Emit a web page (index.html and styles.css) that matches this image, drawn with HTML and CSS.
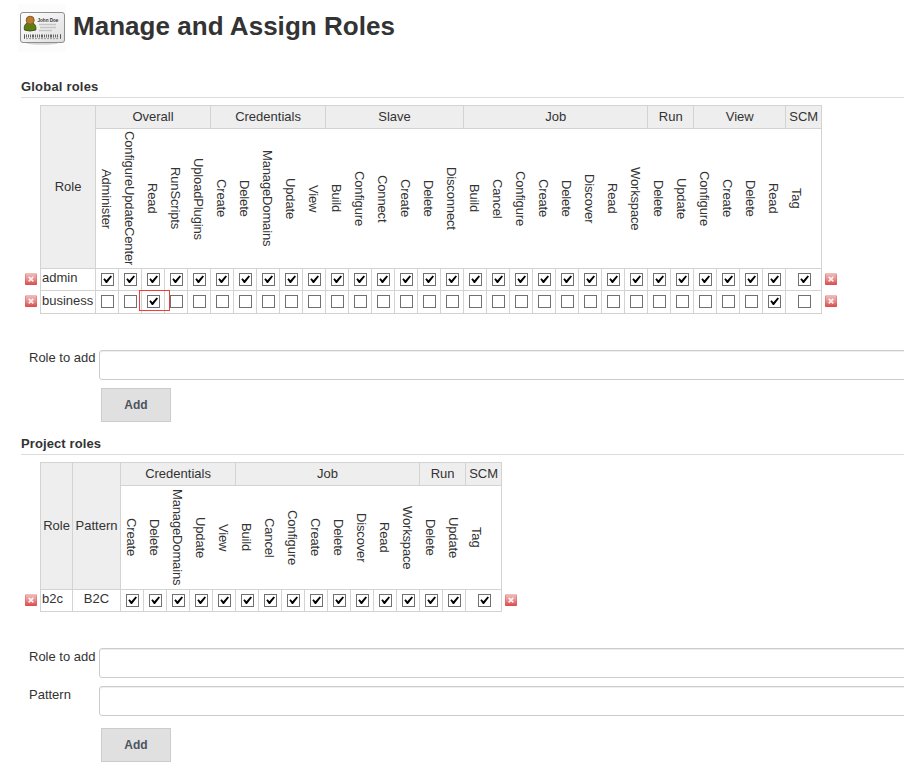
FILE: index.html
```
<!DOCTYPE html>
<html lang="en">
<head>
    <meta charset="UTF-8">
    <title>Manage and Assign Roles</title>
    <link rel="stylesheet" href="styles.css">
</head>
<body>

    <!-- Shared icons -->
    <svg class="defs">
        <defs>
            <linearGradient id="red" x1="0" y1="0" x2="0" y2="1">
                <stop offset="0" stop-color="#f2c0c0"/>
                <stop offset="0.5" stop-color="#e69090"/>
                <stop offset="1" stop-color="#dc4646"/>
            </linearGradient>
            <linearGradient id="card" x1="0" y1="0" x2="1" y2="1">
                <stop offset="0" stop-color="#ffffff"/>
                <stop offset="1" stop-color="#dedede"/>
            </linearGradient>
        </defs>
        <symbol id="delete" viewBox="0 0 12 12">
            <rect width="12" height="12" rx="1" fill="url(#red)"/>
            <path d="M0.5 1V11.5H11.5V1" fill="none" stroke="#d65a5a" stroke-opacity="0.4"/>
            <path d="M3.7 3.9L8.3 8.3M8.3 3.9L3.7 8.3" stroke="#fff" stroke-opacity="0.85" stroke-width="1.8"/>
        </symbol>
        <symbol id="box" viewBox="0 0 13 13">
            <rect x="0.5" y="0.5" width="12" height="12" fill="#fff" stroke="#707070"/>
        </symbol>
        <symbol id="checked" viewBox="0 0 13 13">
            <rect x="0.5" y="0.5" width="12" height="12" fill="#fff" stroke="#707070"/>
            <path d="M2.3 6.2L3.7 5.2L5.4 7.2L9.6 2.5L11 3.4L6 9.9H4.9Z" fill="#000"/>
        </symbol>
    </svg>

    <h1>
        <svg class="logo" viewBox="0 0 48 48">
            <rect width="48" height="48" fill="#fcfcfc"/>
            <ellipse cx="24" cy="39" rx="16" ry="1.8" fill="#d5d5d5"/>
            <rect x="2.5" y="8.5" width="44" height="30" rx="2.5" fill="url(#card)" stroke="#8d8f8e"/>
            <path d="M6.5 26C5.5 21 8 18.5 12 18.5S18.5 21 17.8 26Q12 28 6.5 26Z" fill="#5d7c16" stroke="#3d560c"/>
            <circle cx="12.2" cy="16.2" r="4" fill="#b97b32" stroke="#8a5a20"/>
            <text class="logo-name" x="19.5" y="17.6">John Doe</text>
            <path d="M21 20.5H38M22 23.5H38M21 26.5H34" stroke="#c4c4c4" stroke-width="1.4"/>
            <path d="M7 30.5H6.5V34.5H7M42 30.5H42.5V34.5H42" fill="none" stroke="#555"/>
            <path d="M8 32H41" stroke="#666" stroke-width="3" stroke-dasharray="1 1 1 1 1 1 2 1"/>
            <path d="M8 34.6H41" stroke="#888" stroke-width="0.8" stroke-dasharray="2 1"/>
        </svg>
        <span>Manage and Assign Roles</span>
    </h1>

    <h3>Global roles</h3>
    <table class="roles global" id="globalRoles"></table>

    <div class="form-row">
        <label for="role">Role to add</label>
        <input type="text" id="role">
    </div>
    <button class="add">Add</button>

    <h3 class="project-title">Project roles</h3>
    <table class="roles project" id="projectRoles"></table>

    <div class="form-row low">
        <label for="projectRole">Role to add</label>
        <input type="text" id="projectRole">
    </div>
    <div class="form-row low">
        <label for="pattern">Pattern</label>
        <input type="text" id="pattern">
    </div>
    <button class="add last">Add</button>

    <script src="script.js"></script>
</body>
</html>
```
FILE: styles.css
```
body {
    margin: 0;
    width: 904px;
    height: 769px;
    overflow: hidden;
    background: #fff;
    color: #333;
    font-family: "Liberation Sans", Arial, sans-serif;
    font-size: 13px;
    line-height: 15px;
}
.defs {
    position: absolute;
    width: 0;
    height: 0;
}
h1 {
    display: flex;
    margin: 0;
    padding: 4px 0 0 18px;
    height: 75px;
    box-sizing: border-box;
    font-size: 26px;
    line-height: 44px;
    white-space: nowrap;
}
h1 span {
    margin-left: 7px;
    letter-spacing: 0.03px;
}
.logo {
    width: 48px;
    height: 48px;
}
.logo-name {
    font-size: 4.6px;
    font-weight: bold;
    fill: #333;
}
h3 {
    margin: 0 0 7px 21px;
    padding: 4px 0 3px;
    height: 23px;
    box-sizing: border-box;
    border-bottom: 1px solid #ddd;
    font-size: 13px;
    line-height: 15px;
    letter-spacing: 0.2px;
}
.project-title {
    margin-top: 10px;
    letter-spacing: 0.1px;
}

/* Permission tables */
.roles {
    margin-left: 24px;
    table-layout: fixed;
    border-collapse: separate;
    border-spacing: 0;
}
.global {
    width: 814px;
    margin-bottom: 36px;
}
.project {
    width: 494px;
    margin-bottom: 36px;
}
.icon-col { width: 16px; }
.perm-col { width: 23px; }
.last-col { width: 36px; }
.global .role-col { width: 55px; }
.project .role-col { width: 32px; }
.pattern-col { width: 48px; }
.end-col { width: 17px; }

.roles td {
    box-sizing: border-box;
    padding: 0;
    border-left: 1px solid #d3d3cf;
    border-top: 1px solid #d3d3cf;
    text-align: center;
    vertical-align: top;
    white-space: nowrap;
}
.roles td.blank {
    border: none;
}
.roles td.end {
    border-top: none;
    text-align: left;
}
.roles tr:last-child td:not(.blank):not(.end) {
    border-bottom: 1px solid #d3d3cf;
}
.groups td {
    height: 23px;
}
.groups .head {
    background: #eee;
    padding-top: 3px;
}
.groups .tall {
    vertical-align: middle;
    padding: 0 0 2px;
}
.roles .perm {
    text-align: left;
    vertical-align: middle;
}
.roles .perm + .perm {
    border-left: none;
}
.global .perms td { height: 140px; }
.project .perms td { height: 104px; }
.perm span {
    display: block;
    margin: 0 auto 0 3px;
    width: 15px;
    writing-mode: vertical-rl;
    text-align: center;
    letter-spacing: -0.15px;
}
.perm + .perm span {
    margin-left: 4px;
}
.role-row td {
    height: 22px;
}
.role-row:last-child td {
    height: 24px;
}
.project .role-row td {
    height: 23px;
}
.roles .name {
    text-align: left;
    padding: 1px 0 0 1px;
}
.global .role-row:last-child .name {
    padding-top: 2px;
}
.roles .pattern {
    padding-top: 1px;
}
.check {
    display: block;
    width: 13px;
    height: 13px;
    margin: 4px auto 0 5px;
}
td:nth-last-child(2) .check {
    margin-left: 12px;
}
.delete {
    display: block;
    width: 12px;
    height: 12px;
    margin: 5px 0 0 1px;
}
.end .delete {
    margin-left: 3px;
}
.marked {
    position: relative;
}
.marked::after {
    content: "";
    position: absolute;
    left: -3px;
    top: -1px;
    width: 29px;
    height: 19px;
    border: 1px solid #f03c3c;
    z-index: 1;
}

/* Forms */
.form-row {
    display: flex;
    height: 38px;
    padding-left: 29px;
}
.form-row label {
    width: 70px;
    flex: none;
}
.low label {
    padding-top: 1px;
}
.form-row input {
    flex: none;
    width: 820px;
    height: 30px;
    box-sizing: border-box;
    border: 1px solid #ccc;
    border-radius: 3px;
    box-shadow: inset 0 1px 1px rgba(0, 0, 0, 0.075);
}
.add {
    display: block;
    width: 70px;
    height: 34px;
    margin: 0 0 0 101px;
    padding: 0;
    background: #e0e0e0;
    border: 1px solid #ccc;
    color: #4d545d;
    font-family: inherit;
    font-size: 12px;
    font-weight: bold;
}
.last {
    margin-top: 4px;
}
```
FILE: script.js
```
const credentials = ['Create', 'Delete', 'ManageDomains', 'Update', 'View'];
const job = ['Build', 'Cancel', 'Configure', 'Create', 'Delete', 'Discover', 'Read', 'Workspace'];
const run = ['Delete', 'Update'];

const globalGroups = [
    ['Overall', ['Administer', 'ConfigureUpdateCenter', 'Read', 'RunScripts', 'UploadPlugins']],
    ['Credentials', credentials],
    ['Slave', ['Build', 'Configure', 'Connect', 'Create', 'Delete', 'Disconnect']],
    ['Job', job],
    ['Run', run],
    ['View', ['Configure', 'Create', 'Delete', 'Read']],
    ['SCM', ['Tag']]
];
const projectGroups = [
    ['Credentials', credentials],
    ['Job', job],
    ['Run', run],
    ['SCM', ['Tag']]
];

function icon(name, cls) {
    return `<svg class="${cls}"><use href="#${name}"/></svg>`;
}

// rows: { name, pattern, checked: list of column numbers or 'all', marked: column number }
function buildTable(id, groups, rows, hasPattern) {
    const perms = groups.flatMap(g => g[1]);
    let html = '<colgroup><col class="icon-col"><col class="role-col">';
    if (hasPattern) html += '<col class="pattern-col">';
    html += perms.map((p, i) => `<col class="${i === perms.length - 1 ? 'last-col' : 'perm-col'}">`).join('');
    html += '<col class="end-col"></colgroup>';

    html += '<tr class="groups"><td class="blank" rowspan="2"></td><td class="head tall" rowspan="2">Role</td>';
    if (hasPattern) html += '<td class="head tall" rowspan="2">Pattern</td>';
    html += groups.map(g => `<td class="head" colspan="${g[1].length}">${g[0]}</td>`).join('');
    html += '<td class="end"></td></tr>';

    html += '<tr class="perms">' + perms.map(p => `<td class="perm"><span>${p}</span></td>`).join('');
    html += '<td class="end"></td></tr>';

    for (const row of rows) {
        html += `<tr class="role-row"><td class="blank">${icon('delete', 'delete')}</td><td class="name">${row.name}</td>`;
        if (hasPattern) html += `<td class="pattern">${row.pattern}</td>`;
        perms.forEach((p, i) => {
            const on = row.checked === 'all' || row.checked.includes(i);
            html += `<td class="${row.marked === i ? 'marked' : ''}">${icon(on ? 'checked' : 'box', 'check')}</td>`;
        });
        html += `<td class="end">${icon('delete', 'delete')}</td></tr>`;
    }
    document.getElementById(id).innerHTML = html;
}

buildTable('globalRoles', globalGroups, [
    { name: 'admin', checked: 'all' },
    { name: 'business', checked: [2, 29], marked: 2 }
], false);

buildTable('projectRoles', projectGroups, [
    { name: 'b2c', pattern: 'B2C', checked: 'all' }
], true);
```
